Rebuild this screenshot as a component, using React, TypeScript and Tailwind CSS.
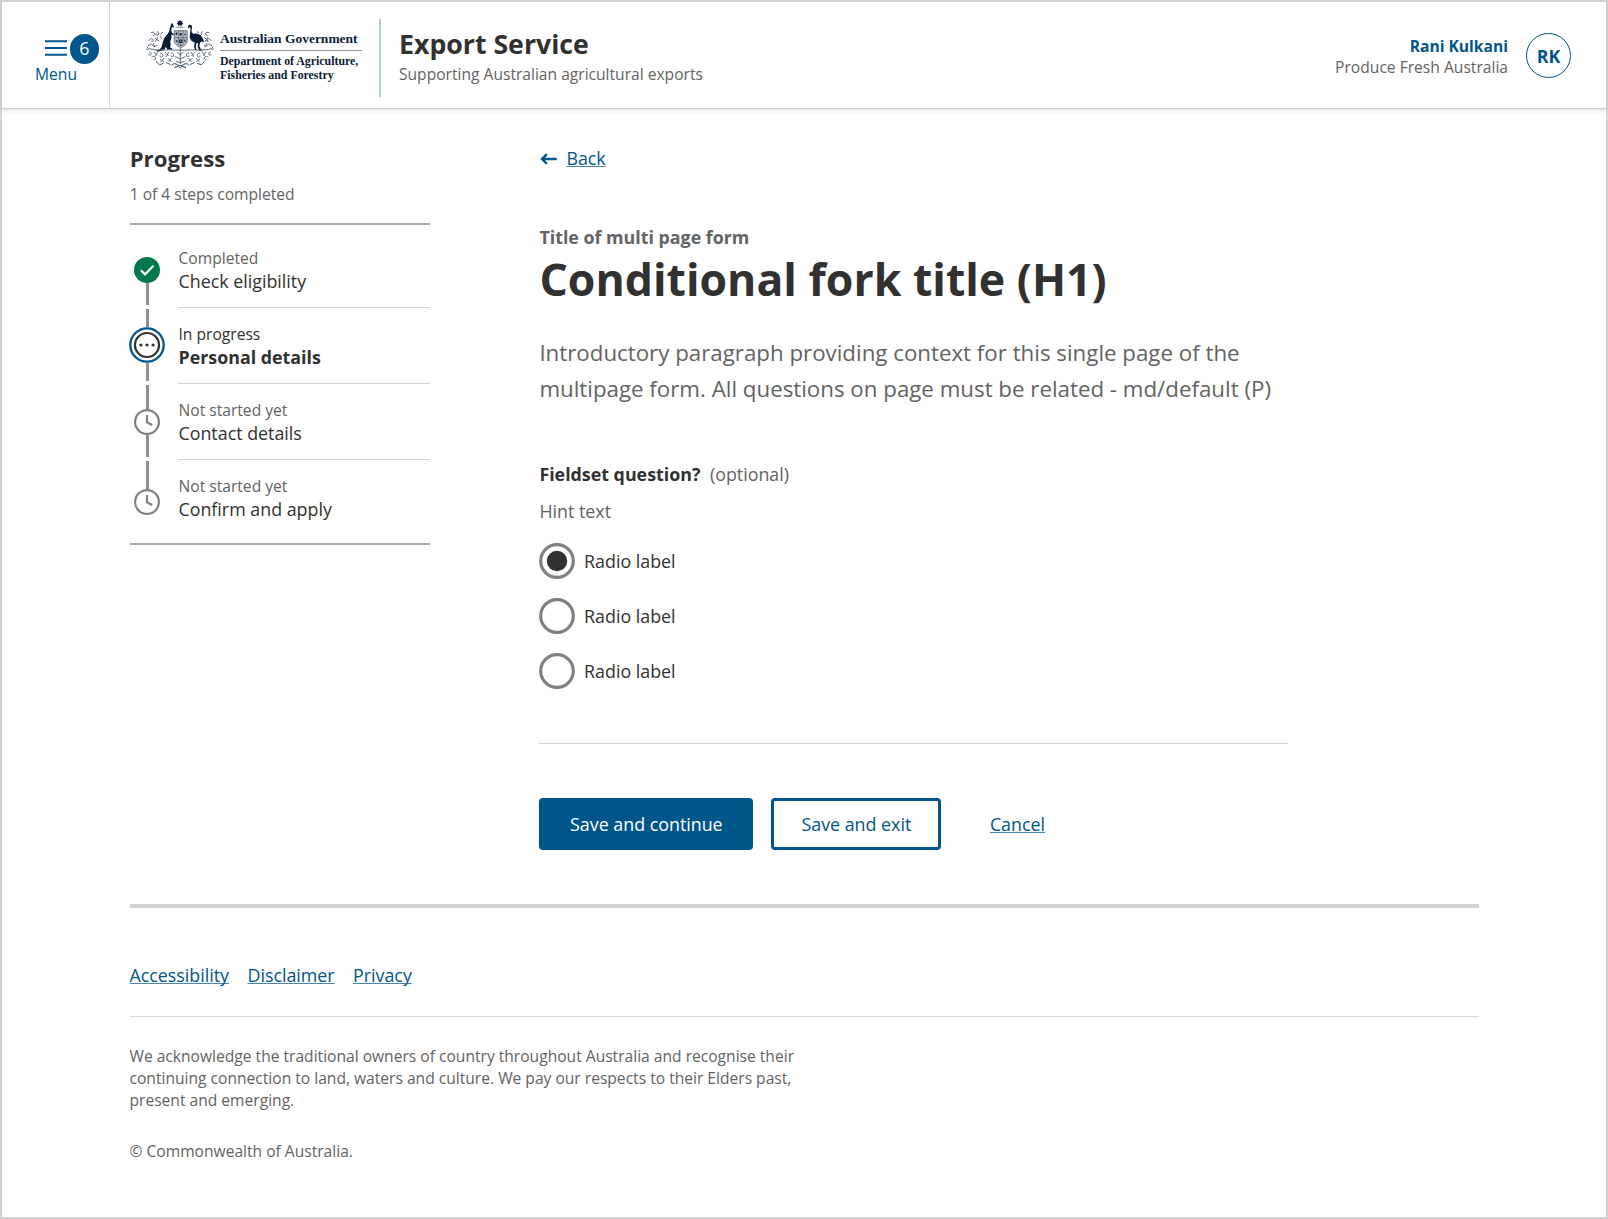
import React from "react";

const link =
  "text-[#00558b] underline decoration-1 underline-offset-[1px] decoration-[#4b88b0] [text-decoration-skip-ink:none]";

function Crest() {
  return (
    <svg width="70" height="52" viewBox="145 18 70 52" fill="none" className="-mt-px shrink-0">
      {/* star and torse */}
      <path d="M180 19.500l.9 1.900 2-.5-.9 1.900 1.600 1.200-2 .5v1.900L180 25l-1.600 1.400v-1.900l-2-.5 1.600-1.200-.9-1.900 2 .5z" fill="#0b1b35" />
      <path d="M176.500 27.300h7" stroke="#26354d" strokeWidth=".9" strokeDasharray="1.200 .5" />
      {/* kangaroo */}
      <path
        d="M171.3 22.8l.7 1.4.9-1 .2 2 1 1.3-.6.8-2 .3-.2 3.2.9 2.2 1.8 1.3-.5.9-2.1-.7.1 3.1-1.2 4 .4 3.4-.6 2.4 2.2 1.2-.3.9-4.5.1-1.5-2.6-1.8 2.4-3.3 1.5-3.7.5-1.2-.9 3.4-.8 2.2-2.6 1.2-5 1.6-4.4 3.2-3.7 2.1-3.8.1-2.8.8-1.2z"
        fill="#0b1b35"
      />
      {/* emu */}
      <path
        d="M188 26.1l1.3-1.3 1.8.1.9 1.4-.2 2.7-.2 3.1 1.500 1.700 3.700-.4 3.700 1.700 2.300 3.300 1.300 4.100-2.300-.9-1.600 1-.9 3.300 1.800 3.800 1.600.8-3.400.3-1.700-4.600.6-3.300-1.700.3-.7 3.500.8 3.200-1.600.1-.9-3.400.6-4-3.300-1.800-1.700-3.400.2-3.400.6-4.200-.3-2.300-.7-.2-1.500 1.200z"
        fill="#0b1b35"
      />
      {/* shield */}
      <path d="M174.300 30.700h12.900v9.600c0 3.700-3 5.600-6.400 7.300-3.500-1.700-6.500-3.600-6.500-7.300z" fill="#b3b9c2" stroke="#4a566b" strokeWidth=".8" />
      <path d="M178.600 31v14.500M183 31v14.500M174.500 37.700h12.500" stroke="#5b6679" strokeWidth=".7" />
      <path d="M175.500 33.500h2M176.500 32.500v2.600M179.800 33.300l1.800 1.800M179.800 35.100l1.800-1.800M184.200 34.200h1.800M176 40.400l1.600 1.600M179.700 40h2.200v2.500h-2.200zM184.200 39.800l1.500 2.200M180.800 44.500v1.500" stroke="#0b1b35" strokeWidth="1.100" />
      {/* compartment */}
      <path d="M146 49.300c5-1.300 8.500 1 13 .7 7 .2 9-.4 14 .1h15c5-.5 8 .2 14-.1 5 .3 8-1.900 12-.8" stroke="#4a566b" strokeWidth=".9" />
      {/* wattle sprays */}
      <g stroke="#4a566b" strokeWidth=".85">
        <path d="M151 33c2-1.500 4-.5 4 1s-2 2-2.500.7M157 31.500c2 .5 2.500 2.500 1 3.500s-2.500-.5-1.500-1.500M163 32l-2.500 2.500M149 41c0-2 2-3 3.500-2s.5 3-1 2.600M155 38l4 3M158 37l-3 5M148 46c1.500-2 3.500-2 5-.5s3 1 4-.5M153 43l2 4M146.500 46.500l2 2M160 36l1.500 2.500" />
        <path d="M209.500 33c-2-1.500-4-.5-4 1s2 2 2.500.7M203 31.500c-2 .5-2.500 2.500-1 3.500M197 31.500l2 1.500M211 41c0-2-2-3-3.500-2s-.5 3 1 2.600M204 37l4 4M208 37l-3 5M212 46c-1.500-2-3.500-2-5-.5s-2 1-3-.5M207 43l-2 4M213.500 46.500l-2 2" />
        <path d="M149 52c2 0 3 1.500 2 2.700s-2.500 0-1.800-1M154 52l3 3.500M158 51.500l-3 5M151.500 57.500c1-1.500 3.200-1.500 4 .2s-1 2.600-2 1.500M160 53c2 0 3.500 2 2.500 3.500s-3 .5-2.500-1M165 52l3.500 4M169 52l-3 5M160 59l4 3M164 58l-4 4.500M171 53c2 0 3 1.500 2.500 3s-2.800 1-2.500-.7M168 58.500l3.500 3M171.500 58l-3 4" />
        <path d="M211 52c-2 0-3 1.500-2 2.700s2.500 0 1.800-1M206 52l-3 3.500M202 51.500l3 5M208.500 57.500c-1-1.500-3.200-1.500-4 .2s1 2.600 2 1.500M200 53c-2 0-3.500 2-2.500 3.500s3 .5 2.500-1M195 52l-3.500 4M191 52l3 5M200 59l-4 3M196 58l4 4.500M189 53c-2 0-3 1.500-2.500 3s2.800 1 2.500-.7M192 58.500l-3.500 3M188.500 58l3 4" />
        <path d="M180.300 48v16M177 52l3.300 3 3.300-3M175 56.500l5.300 2.500 5.300-2.500M176 61.500l4.300 1 4.300-1" />
      </g>
      {/* scroll */}
      <path d="M156 61.500l3.500 3.300 4-1.600M204.500 61.500l-3.500 3.300-4-1.600M166 62.500l4.500 2M194.500 62.500l-4.500 2" stroke="#4a566b" strokeWidth="1" />
      <path d="M171.500 65.500c2-2.500 4-2 6-.7 1.800 1 4 1 5.800 0 2-1.300 4-1.800 6 .7M174.500 67.500l4-1.200 1.800 1.700 1.800-1.700 4 1.200" stroke="#26354d" strokeWidth="1" />
    </svg>
  );
}

function Header() {
  return (
    <header className="flex h-[107px] shrink-0 border-b border-[#cfcfcf] shadow-[0_2px_4px_rgba(0,0,0,0.1)]">
      <button className="flex h-[105px] w-[108px] shrink-0 flex-col items-start border-r border-[#d0d0d0] pt-[32px] text-[#00558b]">
        <span className="flex items-center pl-[43px]">
          <svg width="22" height="16" viewBox="0 0 22 16" stroke="#00558b" strokeWidth="1.900" className="-mt-px">
            <path d="M0 1.300h22M0 8h22M0 14.700h22" />
          </svg>
          <span className="ml-[2.500px] flex size-[29.500px] items-center justify-center rounded-full bg-[#00558b] text-[17.84px] leading-none text-white">
            6
          </span>
        </span>
        <span className="-mt-[2px] pl-[33px] text-[15.61px] leading-6">Menu</span>
      </button>
      <div className="flex pl-[35px] pt-[17px]">
        <Crest />
        <div className="ml-[5px] mt-[12px] w-[142px] whitespace-nowrap font-['Liberation_Serif',serif] font-bold text-[#0b1b35]">
          <div className="border-b border-[#8f97a3] pb-[4px] text-[13.5px] leading-[15px]">Australian Government</div>
          <div className="pt-[3px] text-[11.85px] leading-[14px]">
            Department of Agriculture,
            <br />
            Fisheries and Forestry
          </div>
        </div>
        <div className="ml-[17px] h-[78px] w-[2px] bg-[#b3cdd6]" />
        <div className="ml-[18px] mt-[5px]">
          <div className="text-[26.7px] font-bold leading-[40px] text-[#313131]">Export Service</div>
          <div className="-mt-[2px] text-[15.6px] leading-6 text-[#636363]">Supporting Australian agricultural exports</div>
        </div>
      </div>
      <div className="ml-auto flex items-start pr-[35px] pt-[31px]">
        <div className="pt-[3px] text-right text-[15.61px] leading-[20.500px]">
          <div className="font-bold text-[#00558b]">Rani Kulkani</div>
          <div className="text-[#636363]">Produce Fresh Australia</div>
        </div>
        <div className="ml-[18px] flex size-[45px] items-center justify-center rounded-full border border-[#00558b] pt-[2px] text-[17.84px] font-bold text-[#00558b]">
          RK
        </div>
      </div>
    </header>
  );
}

type Kind = "done" | "current" | "todo";

function StepIcon({ kind }: { kind: Kind }) {
  if (kind === "done")
    return (
      <svg width="26" height="26" viewBox="0 0 26 26" fill="none" className="shrink-0">
        <circle cx="13" cy="13" r="13" fill="#00784b" />
        <path d="M6.900 13.300l4.100 4.100 8.400-8.700" stroke="#fff" strokeWidth="2.200" />
      </svg>
    );
  if (kind === "current")
    return (
      <svg width="36" height="36" viewBox="0 0 36 36" fill="none" className="shrink-0">
        <circle cx="18" cy="18" r="16.700" stroke="#00558b" strokeWidth="2.300" />
        <circle cx="18" cy="18" r="12" stroke="#313131" strokeWidth="2.200" />
        <g fill="#313131">
          <circle cx="11.900" cy="18" r="1.600" />
          <circle cx="18" cy="18" r="1.600" />
          <circle cx="24.100" cy="18" r="1.600" />
        </g>
      </svg>
    );
  return (
    <svg width="26" height="26" viewBox="0 0 26 26" fill="none" stroke="#808080" strokeWidth="2.200" className="shrink-0">
      <circle cx="13" cy="13" r="11.900" />
      <path d="M13 6v7.300l5.200 2.700" />
    </svg>
  );
}

const steps: { kind: Kind; status: string; label: string; lead: string }[] = [
  { kind: "done", status: "Completed", label: "Check eligibility", lead: "h-[24.7px] opacity-0" },
  { kind: "current", status: "In progress", label: "Personal details", lead: "h-[18.6px]" },
  { kind: "todo", status: "Not started yet", label: "Contact details", lead: "h-[23.8px]" },
  { kind: "todo", status: "Not started yet", label: "Confirm and apply", lead: "h-[28.4px]" },
];

function Progress() {
  return (
    <aside className="w-[300px] shrink-0">
      <h2 className="pt-px text-[22.2px] font-bold leading-8 text-[#313131]">Progress</h2>
      <p className="mt-[7px] text-[15.61px] leading-6 text-[#636363]">1 of 4 steps completed</p>
      <ol className="mt-[17px] border-y-2 border-[#aaaaaa] pb-[7.300px] pt-[7.3px]">
        {steps.map((s, i) => {
          const last = i === steps.length - 1;
          return (
            <li key={i} className="flex h-[75.9px]">
              <div className="flex w-[35px] shrink-0 flex-col items-center pb-[3px]">
                <div className={`w-[3px] shrink-0 bg-[#909090] ${i ? "mt-[0.7px]" : ""} ${s.lead}`} />
                <StepIcon kind={s.kind} />
                {!last && <div className="w-[3px] flex-1 bg-[#909090]" />}
              </div>
              <div className={`ml-[13.800px] flex-1 pt-[15px] ${last ? "" : "border-b border-[#d3d3d3]"}`}>
                <div className={`text-[15.61px] leading-[23px] ${s.kind === "current" ? "text-[#313131]" : "text-[#636363]"}`}>{s.status}</div>
                <div className={`-mt-[1.3px] text-[17.84px] leading-6 text-[#313131] ${s.kind === "current" ? "font-bold" : ""}`}>{s.label}</div>
              </div>
            </li>
          );
        })}
      </ol>
    </aside>
  );
}

function Radio({ checked }: { checked?: boolean }) {
  return (
    <label className="flex h-[36px] items-center">
      <svg width="36" height="36" viewBox="0 0 36 36" fill="none">
        <circle cx="18" cy="18" r="16.300" stroke="#808080" strokeWidth="3.200" />
        {checked && <circle cx="18" cy="18" r="10.200" fill="#313131" />}
      </svg>
      <span className="ml-[8.700px] text-[17.84px] leading-7 text-[#313131]">Radio label</span>
    </label>
  );
}

function Form() {
  return (
    <main className="ml-[109.700px] w-[748.500px] pt-[2px] text-[17.84px] leading-7">
      <div className="flex h-7 items-center">
        <svg width="17" height="14" viewBox="0 0 17 14" fill="none" stroke="#00558b" strokeWidth="2.400" strokeLinecap="round" className="ml-[0.5px] mt-px">
          <path d="M2 7h13.800M6.200 2.800L2 7l4.200 4.200" />
        </svg>
        <a href="#" className={`ml-[9.500px] ${link}`}>Back</a>
      </div>
      <p className="mt-[51px] font-bold text-[#636363]">Title of multi page form</p>
      <h1 className="whitespace-nowrap pt-px text-[44.6px] font-bold leading-[54px] text-[#313131]">Conditional fork title (H1)</h1>
      <p className="mt-[29px] text-[22.3px] leading-[36px] text-[#636363]">
        Introductory paragraph providing context for this single page of the
        <br />
        multipage form. All questions on page must be related - md/default (P)
      </p>
      <p className="mt-[53px]">
        <span className="font-bold text-[#313131]">Fieldset question?</span>
        <span className="ml-[9.500px] text-[#636363]">(optional)</span>
      </p>
      <p className="mt-[9px] text-[#636363]">Hint text</p>
      <div className="mt-[18px] flex flex-col gap-[19px]">
        <Radio checked />
        <Radio />
        <Radio />
      </div>
      <hr className="mt-[54px] border-[#d3d3d3]" />
      <div className="mt-[54px] flex h-[52px] items-stretch">
        <button className="w-[214px] rounded-[4px] bg-[#00558b] pb-px text-white">Save and continue</button>
        <button className="ml-[18px] w-[170px] rounded-[4px] border-[3px] border-[#00558b] pb-px text-[#00558b]">Save and exit</button>
        <a href="#" className={`-mt-px ml-[48.500px] self-center ${link}`}>Cancel</a>
      </div>
    </main>
  );
}

export default function App() {
  return (
    <div className="flex h-[1219px] w-[1608px] flex-col border-2 border-[#d3d3d3] bg-white font-['Open_Sans',sans-serif]">
      <Header />
      <div className="flex pl-[127.700px] pt-[33px]">
        <Progress />
        <Form />
      </div>
      <footer className="ml-[127.500px] mt-[54px] w-[1349px] border-t-4 border-[#d3d3d3] pt-[52.500px]">
        <nav className="flex gap-[18.400px] text-[17.84px] leading-7">
          <a href="#" className={link}>Accessibility</a>
          <a href="#" className={link}>Disclaimer</a>
          <a href="#" className={link}>Privacy</a>
        </nav>
        <hr className="mt-[27.500px] border-[#d9d9d9]" />
        <div className="mt-[28px] text-[15.6px] leading-[22px] text-[#636363]">
          <p>
            We acknowledge the traditional owners of country throughout Australia and recognise their
            <br />
            continuing connection to land, waters and culture. We pay our respects to their Elders past,
            <br />
            present and emerging.
          </p>
          <p className="mt-[29px]">© Commonwealth of Australia.</p>
        </div>
      </footer>
    </div>
  );
}
